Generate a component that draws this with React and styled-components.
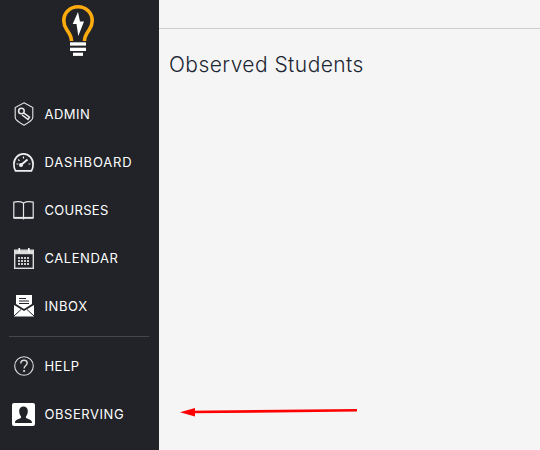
import React from 'react';
import styled, { createGlobalStyle } from 'styled-components';

const GlobalStyle = createGlobalStyle`
  html, body {
    margin: 0;
    padding: 0;
    height: 100%;
    overflow: hidden;
    background: #f5f5f5;
    font-family: Inter, "Liberation Sans", sans-serif;
  }
`;

const Page = styled.div`
  display: flex;
  width: 540px;
  height: 450px;
  position: relative;
  overflow: hidden;
`;

const Sidebar = styled.nav`
  width: 159px;
  flex-shrink: 0;
  background: #212328;
  display: flex;
  flex-direction: column;
`;

const LogoBox = styled.div`
  height: 90px;
  display: flex;
  justify-content: center;
  align-items: flex-start;
  padding-right: 3px;
  padding-top: 5px;
  box-sizing: border-box;
`;

const Group = styled.div`
  display: flex;
  flex-direction: column;
`;

const Item = styled.div`
  height: 48px;
  display: flex;
  align-items: center;
  padding-left: 12px;
  color: #fff;
  font-size: 13px;
  font-weight: 400;
  letter-spacing: ${props => props.$tracking || 0.45}px;
`;

const IconBox = styled.span`
  width: 23px;
  height: 24px;
  margin-right: 9.5px;
  display: flex;
  align-items: center;
  justify-content: center;
  flex-shrink: 0;
`;

const Divider = styled.div`
  height: 1px;
  background: #44464b;
  margin: 6px 10px 5px 9px;
`;

const Main = styled.main`
  flex: 1;
  background: #f5f5f5;
`;

const TopBar = styled.div`
  height: 28px;
  border-bottom: 1px solid #cccccc;
`;

const Title = styled.h1`
  margin: 23px 0 0 10px;
  font-size: 21px;
  line-height: 26px;
  font-weight: 300;
  letter-spacing: 0.44px;
  color: #1c2733;
`;

const Arrow = styled.svg`
  position: absolute;
  left: 170px;
  top: 400px;
`;

const Logo = () => (
  <svg width="32" height="51" viewBox="0 0 32 51">
    <path
      d="M9.5 36 C9.5 31 7 28 4.8 24.8 C2.8 21.8 1.8 19 1.8 15.8 C1.8 7.8 8 1.8 16 1.8 C24 1.8 30.2 7.8 30.2 15.8 C30.2 19 29.2 21.8 27.2 24.8 C25 28 22.5 31 22.5 36"
      fill="none"
      stroke="#fbab0e"
      strokeWidth="3.6"
    />
    <path d="M16 7 L10.7 19 H14.5 L16.3 31 L22 16.5 H18 Z" fill="#fff" />
    <rect x="8" y="37.3" width="16" height="3.3" fill="#fff" />
    <rect x="8" y="42.7" width="16" height="3.3" fill="#fff" />
    <rect x="11" y="47.7" width="10" height="3.2" fill="#fff" />
  </svg>
);

const AdminIcon = () => (
  <svg width="20" height="24" viewBox="0 0 20 24" fill="none" stroke="#e8e8e8">
    <path d="M10 .8 L18.8 5.5 V15.5 C18.8 18 14 21 10 23.2 C6 21 1.2 18 1.2 15.5 V5.5 Z" strokeWidth="1.1" />
    <circle cx="7.4" cy="9" r="2.8" strokeWidth="1.5" />
    <path d="M9.6 10.8 L15.5 15.2 L14 17.4 L8 13" strokeWidth="1.5" />
  </svg>
);

const DashIcon = () => (
  <svg width="21" height="19" viewBox="0 0 21 19" fill="none" stroke="#f0f0f0">
    <path d="M2.5 17.8 C1.2 15.8 .9 13.5 .9 11 C.9 5.3 5.2 .9 10.5 .9 C15.8 .9 20.1 5.3 20.1 11 C20.1 13.5 19.8 15.8 18.5 17.8 Z" strokeWidth="1.7" />
    <path d="M8 12 L14.5 6.5" strokeWidth="1.9" />
    <circle cx="8" cy="12" r="2" fill="#f0f0f0" stroke="none" />
    <path d="M3.5 11 H5.5 M5.2 6.5 L6.5 7.8 M10.5 3.5 V5.5 M17.5 11 H15.5" strokeWidth="1.2" />
  </svg>
);

const BookIcon = () => (
  <svg width="21" height="19" viewBox="0 0 21 19" fill="none" stroke="#e8e8e8">
    <path d="M.8 1.2 C4 .4 8 .6 10.5 2 C13 .6 17 .4 20.2 1.2 V16.8 H.8 Z" strokeWidth="1.2" />
    <path d="M10.5 2 V18.5" strokeWidth="1.2" />
    <path d="M.8 16.8 H20.2" strokeWidth="1.8" />
  </svg>
);

const CalendarIcon = () => (
  <svg width="20" height="21" viewBox="0 0 20 21">
    <rect x=".7" y="2.2" width="18.6" height="18.1" fill="none" stroke="#ddd" strokeWidth="1.4" />
    <rect x="1" y="3" width="18" height="3.2" fill="#ddd" />
    <rect x="4.5" y="0" width="1.6" height="4" fill="#fff" />
    <rect x="14" y="0" width="1.6" height="4" fill="#fff" />
    {[9, 12, 15].map(y =>
      [4, 7, 10, 13].map(x => <rect key={`${x}-${y}`} x={x} y={y} width="2" height="2" fill="#ccc" />)
    )}
  </svg>
);

const InboxIcon = () => (
  <svg width="20" height="22" viewBox="0 0 20 22">
    <path d="M2 0 H18 V9 L10 14 L2 9 Z" fill="#fff" />
    <path d="M5 3.5 H12 M5 6 H15 M5 8.5 H15" stroke="#212328" strokeWidth="1.1" />
    <path d="M0 10 L10 16 L20 10 V21.5 H0 Z" fill="#fff" />
    <path d="M0 21 L7 14.5 M20 21 L13 14.5" stroke="#212328" strokeWidth="1" />
  </svg>
);

const HelpIcon = () => (
  <svg width="20" height="20" viewBox="0 0 20 20" fill="none">
    <circle cx="10" cy="10" r="9.3" stroke="#ddd" strokeWidth="1.1" />
    <path d="M6.8 7.4 C6.8 5.4 8.2 4.2 10 4.2 C11.8 4.2 13.2 5.4 13.2 7.1 C13.2 9.4 10.1 9.6 10.1 12.4" stroke="#ddd" strokeWidth="1.4" />
    <circle cx="10.1" cy="15" r="1.1" fill="#ddd" />
  </svg>
);

const ObserveIcon = () => (
  <svg width="23" height="23" viewBox="0 0 23 23">
    <rect width="23" height="23" rx="2" fill="#fff" />
    <path d="M3 20 C3 16.8 5.5 16.5 8 15.5 C9 15 9.3 14.4 9 13.5 C7.8 12 7.2 10 7.2 8 C7.2 5.4 9 3.6 11.5 3.6 C14 3.6 15.8 5.4 15.8 8 C15.8 10 15.2 12 14 13.5 C13.7 14.4 14 15 15 15.5 C17.5 16.5 20 16.8 20 20 Z" fill="#212328" />
  </svg>
);

const items = [
  { label: 'ADMIN', Icon: AdminIcon },
  { label: 'DASHBOARD', Icon: DashIcon, tracking: 0.8 },
  { label: 'COURSES', Icon: BookIcon, tracking: 0.3 },
  { label: 'CALENDAR', Icon: CalendarIcon, tracking: 0.55 },
  { label: 'INBOX', Icon: InboxIcon, tracking: 0.6 },
];

const extras = [
  { label: 'HELP', Icon: HelpIcon },
  { label: 'OBSERVING', Icon: ObserveIcon, tracking: 0.55 },
];

const renderItem = ({ label, Icon, tracking }) => (
  <Item key={label} $tracking={tracking}>
    <IconBox>
      <Icon />
    </IconBox>
    {label}
  </Item>
);

const App = () => (
  <Page>
    <GlobalStyle />
    <Sidebar>
      <LogoBox>
        <Logo />
      </LogoBox>
      <Group>{items.map(renderItem)}</Group>
      <Divider />
      <Group>{extras.map(renderItem)}</Group>
    </Sidebar>
    <Main>
      <TopBar />
      <Title>Observed Students</Title>
    </Main>
    <Arrow width="190" height="20" viewBox="0 0 190 20">
      <path d="M187 10.3 L20 12" stroke="#fe0000" strokeWidth="2.6" fill="none" />
      <path d="M10 12.2 L25 8 V16.4 Z" fill="#fe0000" />
    </Arrow>
  </Page>
);

export default App;
